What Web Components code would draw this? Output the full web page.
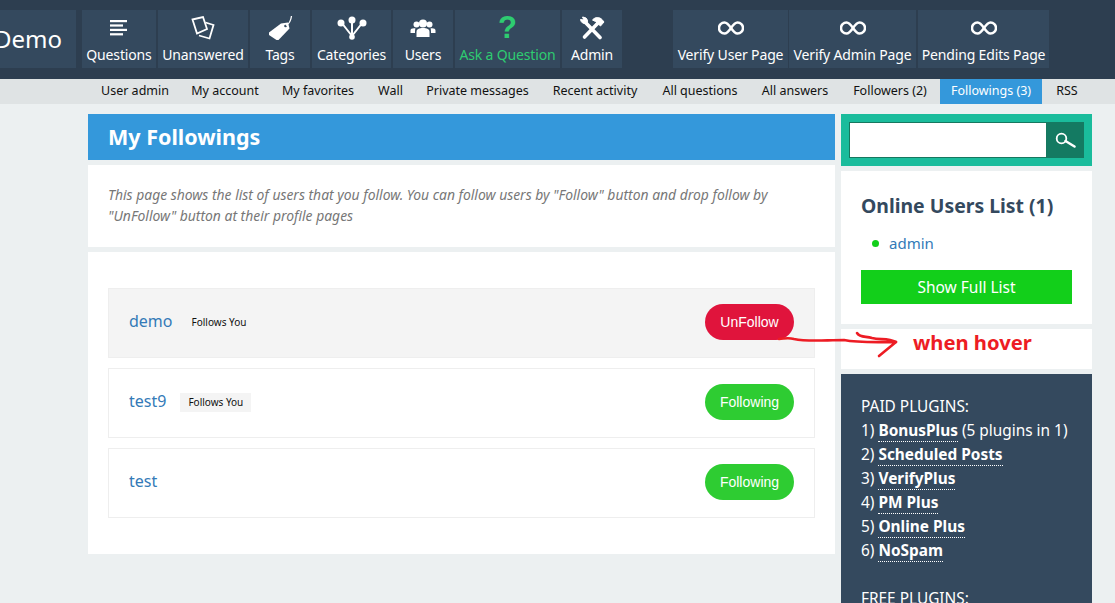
<!DOCTYPE html>
<html>
<head>
<meta charset="utf-8">
<title>My Followings</title>
<style>
  html, body { margin: 0; height: 603px; overflow: hidden; }
  body { background: #ecf0f1; font-family: "Noto Sans", "Open Sans", sans-serif; color: #34495e; position: relative; }
  .columns { display: flex; padding: 10px 23px 0 88px; gap: 6px; height: 489px; overflow: hidden; }
  .scribble { position: absolute; left: 770px; top: 325px; }
</style>
</head>
<body>
<template id="nav-item-tpl">
  <style>
    :host { display: flex; flex-direction: column; align-items: center; height: 58px; background: #34495e; color: #fff; font-size: 14px; letter-spacing: -0.15px; box-sizing: border-box; white-space: nowrap; }
    :host([accent]) { color: #2ecc71; }
    :host([brand]) { justify-content: center; align-items: flex-end; overflow: hidden; font-size: 24px; letter-spacing: 0; padding-right: 14px; }
    :host([brand]) .icon { display: none; }
    .icon { height: 36px; display: flex; align-items: center; justify-content: center; }
    .label { line-height: 18px; }
  </style>
  <div class="icon"><slot name="icon"></slot></div>
  <div class="label"><slot></slot></div>
</template>

<template id="card-tpl">
  <style>
    :host { display: block; background: #fff; margin-bottom: 5px; box-sizing: border-box; }
  </style>
  <slot></slot>
</template>

<template id="follow-row-tpl">
  <style>
    :host { display: flex; align-items: center; height: 70px; box-sizing: border-box; padding: 0 20px; border: 1px solid #eee; margin-bottom: 10px; background: #fff; }
    :host([hover]) { background: #f4f4f4; }
    .name { color: #337ab7; font-size: 16px; line-height: 22px; margin-top: -4px; }
    .badge { display: none; font-size: 10px; color: #111; background: #f4f4f4; padding: 3px 8px; margin-left: 14px; line-height: 13px; margin-top: -1px; }
    :host([badge]) .badge { display: block; }
    :host([hover]) .badge { margin-left: 11px; }
    .btn { margin-left: auto; width: 89px; height: 36px; margin-top: -3px; text-align: center; border-radius: 18px; background: #2ecc32; color: #fff; font: 14px/36px "Liberation Sans", Arial, sans-serif; }
    :host([hover]) .btn { background: #e0143c; }
  </style>
  <span class="name"><slot></slot></span>
  <span class="badge">Follows You</span>
  <span class="btn"></span>
</template>

<q-navbar>
  <q-nav-item brand style="width:76px;margin-right:4px;">Demo</q-nav-item>
  <q-nav-item style="width:74px">
    <svg slot="icon" width="18" height="16" viewBox="0 0 18 16" fill="#fff"><rect width="17" height="2.2" y="0"/><rect width="13" height="2.2" y="4.4"/><rect width="17" height="2.2" y="8.8"/><rect width="13" height="2.2" y="13.2"/></svg>
    Questions
  </q-nav-item>
  <q-nav-item style="width:90px">
    <svg slot="icon" width="24" height="24" viewBox="0 0 24 24" fill="none" stroke="#fff" stroke-width="1.8"><path d="M1.5 3.5 12 1l4 12-10 4.500z"/><path d="M14.500 6.500 22.500 9l-4 13.500-10.500-3"/></svg>
    Unanswered
  </q-nav-item>
  <q-nav-item style="width:60px">
    <svg slot="icon" width="25" height="26" viewBox="0 0 25 26"><path d="M1 17.500 13 8.500 20 7.500 21.500 13.500 10.500 25 8.500 25 1 20z" fill="#fff"/><circle cx="17.500" cy="11" r="1.300" fill="#34495e"/><path d="M18 10.500C21 9 23 5 23.500 1" fill="none" stroke="#fff" stroke-width="1.300"/></svg>
    Tags
  </q-nav-item>
  <q-nav-item style="width:79px">
    <svg slot="icon" width="30" height="24" viewBox="0 0 30 24" fill="#fff"><path d="M4 6 15 20 26 6M15 4V20" fill="none" stroke="#fff" stroke-width="2"/><circle cx="4" cy="7" r="3.500"/><circle cx="15" cy="4" r="3.500"/><circle cx="26" cy="7" r="3.500"/><circle cx="15" cy="21" r="2.800"/></svg>
    Categories
  </q-nav-item>
  <q-nav-item style="width:60px">
    <svg slot="icon" width="26" height="18" viewBox="0 0 26 18" fill="#fff"><circle cx="13" cy="4.500" r="4"/><circle cx="6.500" cy="5.500" r="3"/><circle cx="19.500" cy="5.500" r="3"/><path d="M6.500 18V13C6.500 10 9 9 13 9s6.500 1 6.500 4v5z"/><path d="M0.500 14V11.500C0.500 10 2.500 9 5.500 9.500 5 10.500 5 12 5 14zM25.500 14V11.500C25.500 10 23.500 9 20.500 9.500 21 10.500 21 12 21 14z"/></svg>
    Users
  </q-nav-item>
  <q-nav-item accent style="width:105px">
    <span slot="icon" style="font:bold 31px/36px 'Liberation Sans',sans-serif;color:#2ecc71">?</span>
    Ask a Question
  </q-nav-item>
  <q-nav-item style="width:60px;margin-right:49px">
    <svg slot="icon" width="26" height="24" viewBox="0 0 26 24" fill="none" stroke="#fff"><path d="M6 6 21 21.500" stroke-width="3.600" stroke-linecap="round"/><path d="M19 7 5.500 21" stroke-width="3.600" stroke-linecap="round"/><path d="M1.500 3.500C2 6.500 4 8 7.500 7.500 9 6.500 9 4 7 2 5.500 1.500 4.500 1 3.500 1L5 4z" fill="#fff" stroke-width="1"/><path d="M13.500 4C16.500 0.500 20.500 1 23 3.500L25 6 21.500 10 16.500 5.500z" fill="#fff" stroke-width="1"/></svg>
    Admin
  </q-nav-item>
  <q-nav-item style="width:115px;margin-right:-1px">
    <svg slot="icon" width="26" height="14" viewBox="0 0 26 14" fill="none" stroke="#fff" stroke-width="2.500"><path d="M13 7C10 2.500 8.500 1.500 6.500 1.500a5.500 5.500 0 0 0 0 11c2 0 3.500-1 6.500-5.500s4.500-5.500 6.500-5.500a5.500 5.500 0 0 1 0 11c-2 0-3.500-1-6.500-5.500z"/></svg>
    Verify User Page
  </q-nav-item>
  <q-nav-item style="width:127px">
    <svg slot="icon" width="26" height="14" viewBox="0 0 26 14" fill="none" stroke="#fff" stroke-width="2.500"><path d="M13 7C10 2.500 8.500 1.500 6.500 1.500a5.500 5.500 0 0 0 0 11c2 0 3.500-1 6.500-5.500s4.500-5.500 6.500-5.500a5.500 5.500 0 0 1 0 11c-2 0-3.500-1-6.500-5.500z"/></svg>
    Verify Admin Page
  </q-nav-item>
  <q-nav-item style="width:131px">
    <svg slot="icon" width="26" height="14" viewBox="0 0 26 14" fill="none" stroke="#fff" stroke-width="2.500"><path d="M13 7C10 2.500 8.500 1.500 6.500 1.500a5.500 5.500 0 0 0 0 11c2 0 3.500-1 6.500-5.500s4.500-5.500 6.500-5.500a5.500 5.500 0 0 1 0 11c-2 0-3.500-1-6.500-5.500z"/></svg>
    Pending Edits Page
  </q-nav-item>
</q-navbar>

<q-subnav></q-subnav>

<div class="columns">
  <q-main></q-main>
  <q-sidebar></q-sidebar>
</div>

<svg class="scribble" width="140" height="40" viewBox="0 0 140 40" fill="none" stroke="#ed1c24" stroke-width="2.600" stroke-linecap="round" stroke-linejoin="round">
  <path d="M9 14C14 14 17 12 24 14 38 17 55 15 74 15 88 18 108 17 126 17L109 31"/>
  <path d="M87 8C90 13 96 11 102 13 110 15 118 13 126 17"/>
</svg>

<script>
  // small helper, most elements just clone a template or set innerHTML
  function fromTemplate(el, id) {
    el.attachShadow({ mode: 'open' });
    el.shadowRoot.appendChild(document.getElementById(id).content.cloneNode(true));
  }

  class QNavbar extends HTMLElement {
    constructor() {
      super();
      this.attachShadow({ mode: 'open' });
      this.shadowRoot.innerHTML = `
        <style>
          :host { display: flex; align-items: flex-start; gap: 2px; height: 79px; box-sizing: border-box; padding-top: 10px; background: #2d3e50; }
        </style>
        <slot></slot>`;
    }
  }
  customElements.define('q-navbar', QNavbar);

  class QNavItem extends HTMLElement {
    constructor() {
      super();
      fromTemplate(this, 'nav-item-tpl');
    }
  }
  customElements.define('q-nav-item', QNavItem);

  class QSubnav extends HTMLElement {
    constructor() {
      super();
      this.attachShadow({ mode: 'open' });
      const links = [
        ['User admin', 90], ['My account', 90], ['My favorites', 96], ['Wall', 49], ['Private messages', 125],
        ['Recent activity', 110], ['All questions', 100], ['All answers', 90], ['Followers (2)', 100], ['Followings (3)', 102, true], ['RSS', 50]
      ];
      this.shadowRoot.innerHTML = `
        <style>
          :host { display: flex; height: 25px; padding-left: 90px; background: #dfe3e4; font-size: 12.5px; color: #111; }
          span { display: block; text-align: center; line-height: 24px; white-space: nowrap; }
          .on { background: #3498db; color: #fff; }
        </style>
        ${links.map(l => `<span class="${l[2] ? 'on' : ''}" style="width:${l[1]}px">${l[0]}</span>`).join('')}`;
    }
  }
  customElements.define('q-subnav', QSubnav);

  class QCard extends HTMLElement {
    constructor() {
      super();
      fromTemplate(this, 'card-tpl');
    }
  }
  customElements.define('q-card', QCard);

  class QFollowRow extends HTMLElement {
    constructor() {
      super();
      fromTemplate(this, 'follow-row-tpl');
    }
    connectedCallback() {
      this.shadowRoot.querySelector('.btn').textContent = this.hasAttribute('hover') ? 'UnFollow' : 'Following';
    }
  }
  customElements.define('q-follow-row', QFollowRow);

  class QMain extends HTMLElement {
    constructor() {
      super();
      this.attachShadow({ mode: 'open' });
      this.shadowRoot.innerHTML = `
        <style>
          :host { display: block; width: 747px; }
          h1 { margin: 0 0 5px; height: 46px; padding-left: 20px; background: #3498db; color: #fff; font-size: 21.5px; font-weight: 700; line-height: 45px; }
          .desc { height: 82px; box-sizing: border-box; padding: 19px 20px 0; font-size: 13.9px; font-style: italic; line-height: 21px; color: #777; }
          .list { height: 302px; box-sizing: border-box; padding: 36px 20px 0; }
        </style>
        <h1>My Followings</h1>
        <q-card class="desc">This page shows the list of users that you follow. You can follow users by "Follow" button and drop follow by<br>"UnFollow" button at their profile pages</q-card>
        <q-card class="list">
          <q-follow-row hover badge>demo</q-follow-row>
          <q-follow-row badge>test9</q-follow-row>
          <q-follow-row>test</q-follow-row>
        </q-card>`;
    }
  }
  customElements.define('q-main', QMain);

  class QSidebar extends HTMLElement {
    constructor() {
      super();
      this.attachShadow({ mode: 'open' });
      const paid = [['BonusPlus', ' (5 plugins in 1)'], ['Scheduled Posts'], ['VerifyPlus'], ['PM Plus'], ['Online Plus'], ['NoSpam']];
      this.shadowRoot.innerHTML = `
        <style>
          :host { display: block; width: 251px; }
          .search { display: flex; height: 52px; box-sizing: border-box; padding: 8px; background: #1abc9c; margin-bottom: 5px; }
          .search input { flex: 1; min-width: 0; box-sizing: border-box; border: 1px solid #16785f; background: #fff; padding: 0; margin: 0; outline: 0; }
          .search .go { width: 37px; display: flex; align-items: center; justify-content: center; background: #147a62; }
          .online { height: 153px; box-sizing: border-box; padding: 20px 20px 0; }
          h2 { margin: 0; font-size: 19.4px; line-height: 30px; font-weight: 700; color: #34495e; }
          .user { display: flex; align-items: center; margin: 9px 0 14px 11px; height: 26px; color: #337ab7; font-size: 15px; }
          .dot { width: 7px; height: 7px; border-radius: 50%; background: #12cf1a; margin-right: 10px; }
          .full { height: 34px; line-height: 34px; text-align: center; background: #12cf1a; color: #fff; font-size: 15.5px; }
          .hover-note { height: 40px; box-sizing: border-box; padding-left: 72px; color: #ed1c24; font-weight: 700; font-size: 20.200px; line-height: 27px; }
          .plugins { height: 229px; box-sizing: border-box; padding: 21px 20px 0; background: #34495e; color: #fff; font-size: 15.4px; line-height: 24px; white-space: nowrap; overflow: hidden; }
          .plugins a { color: #fff; font-weight: 700; border-bottom: 1px dotted #fff; }
          .gap { height: 24px; }
        </style>
        <div class="search">
          <input type="text">
          <div class="go">
            <svg width="21" height="16" viewBox="0 0 21 16" fill="none" stroke="#fff"><circle cx="6.500" cy="6.500" r="4.800" stroke-width="1.800"/><path d="M10.500 9 19.500 14.500" stroke-width="2.500" stroke-linecap="round"/></svg>
          </div>
        </div>
        <q-card class="online">
          <h2>Online Users List (1)</h2>
          <div class="user"><span class="dot"></span>admin</div>
          <div class="full">Show Full List</div>
        </q-card>
        <q-card class="hover-note">when hover</q-card>
        <div class="plugins">
          <div>PAID PLUGINS:</div>
          ${paid.map((p, i) => `<div>${i + 1}) <a>${p[0]}</a>${p[1] || ''}</div>`).join('')}
          <div class="gap"></div>
          <div>FREE PLUGINS:</div>
        </div>`;
    }
  }
  customElements.define('q-sidebar', QSidebar);
</script>
</body>
</html>
